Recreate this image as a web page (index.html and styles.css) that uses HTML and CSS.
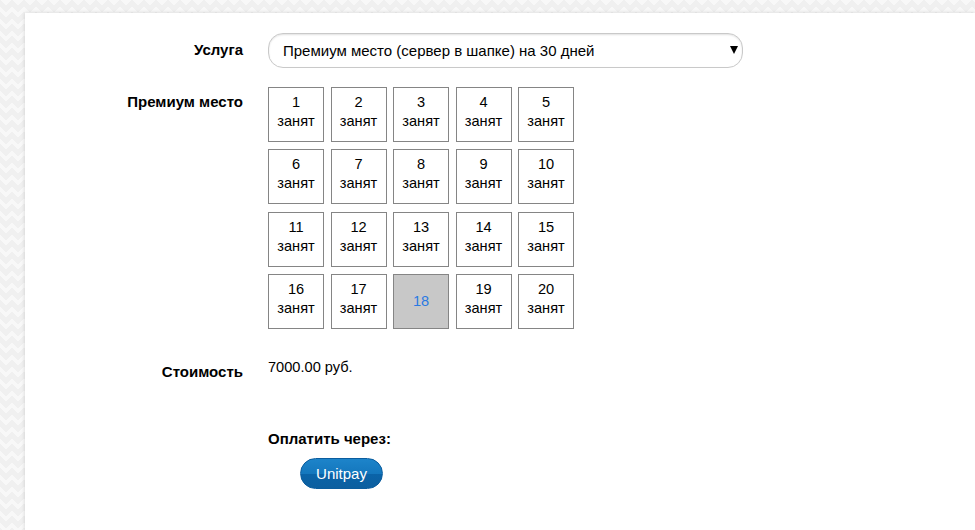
FILE: index.html
```html
<!DOCTYPE html>
<html lang="ru">
<head>
  <meta charset="UTF-8" />
  <title>Премиум место</title>
  <meta name="viewport" content="width=device-width, initial-scale=1.0" />
  <link rel="stylesheet" href="styles.css">
</head>
<body>
  <div class="card">

    <div class="row row-service">
      <div class="label">Услуга</div>
      <div class="field">
        <div class="select-wrap">
          <select class="select">
            <option>Премиум место (сервер в шапке) на 30 дней</option>
          </select>
        </div>
      </div>
    </div>

    <div class="row row-places">
      <div class="label">Премиум место</div>
      <div class="field">
        <div class="places">
          <div class="place">1<br>занят</div>
          <div class="place">2<br>занят</div>
          <div class="place">3<br>занят</div>
          <div class="place">4<br>занят</div>
          <div class="place">5<br>занят</div>
          <div class="place">6<br>занят</div>
          <div class="place">7<br>занят</div>
          <div class="place">8<br>занят</div>
          <div class="place">9<br>занят</div>
          <div class="place">10<br>занят</div>
          <div class="place">11<br>занят</div>
          <div class="place">12<br>занят</div>
          <div class="place">13<br>занят</div>
          <div class="place">14<br>занят</div>
          <div class="place">15<br>занят</div>
          <div class="place">16<br>занят</div>
          <div class="place">17<br>занят</div>
          <a class="place free selected" href="#">18</a>
          <div class="place">19<br>занят</div>
          <div class="place">20<br>занят</div>
        </div>
      </div>
    </div>

    <div class="row row-price">
      <div class="label">Стоимость</div>
      <div class="field price">7000.00 руб.</div>
    </div>

    <div class="row row-pay">
      <div class="label"></div>
      <div class="field">
        <div class="pay-title">Оплатить через:</div>
        <button class="pay-btn">Unitpay</button>
      </div>
    </div>

  </div>
</body>
</html>
```

FILE: styles.css
```css
html, body {
  height: 100%;
}

body {
  margin: 0;
  font-family: "Liberation Sans", Arial, sans-serif;
  font-size: 14.6px;
  color: #000;
  background-color: #f0f0f0;
  background-image:
    linear-gradient(135deg, #f8f8f8 25%, transparent 25%),
    linear-gradient(225deg, #f8f8f8 25%, transparent 25%),
    linear-gradient(315deg, #f8f8f8 25%, transparent 25%),
    linear-gradient(45deg, #f8f8f8 25%, transparent 25%);
  background-position: -6px 0, -6px 0, 0 0, 0 0;
  background-size: 12px 12px;
  overflow: hidden;
}

.card {
  box-sizing: border-box;
  height: 517px;
  margin: 13px 0 0 25px;
  padding-top: 20px;
  background: #fff;
  box-shadow: 0 0 4px rgba(0, 0, 0, 0.15);
}

.row {
  display: grid;
  grid-template-columns: 218px 475px;
  column-gap: 25px;
}

.label {
  text-align: right;
  font-weight: bold;
  font-size: 15px;
  line-height: 20px;
  padding-top: 5px;
}

.row-service .label {
  padding-top: 7px;
}

.row-places {
  margin-top: 19px;
}

.row-price {
  margin-top: 28px;
}

.row-pay {
  margin-top: 47px;
}

/* select */
.select-wrap {
  position: relative;
}

.select-wrap::after {
  content: "";
  position: absolute;
  right: 5px;
  top: 13px;
  border-left: 4px solid transparent;
  border-right: 4px solid transparent;
  border-top: 8px solid #000;
  pointer-events: none;
}

.select {
  display: block;
  width: 475px;
  height: 35px;
  padding: 0 30px 0 14px;
  font-family: inherit;
  font-size: 15px;
  color: #000;
  background: #fff;
  border: 1px solid #c9c9c9;
  border-radius: 15px;
  box-shadow: inset 0 1px 2px rgba(0, 0, 0, 0.12);
  appearance: none;
  -webkit-appearance: none;
  outline: none;
}

/* places */
.places {
  display: grid;
  grid-template-columns: repeat(5, 56px);
  grid-auto-rows: 55px;
  column-gap: 6.5px;
  row-gap: 7.33px;
}

.place {
  box-sizing: border-box;
  border: 1px solid #858585;
  text-align: center;
  line-height: 19px;
  padding-top: 5px;
  color: #000;
  text-decoration: none;
}

.place.free {
  display: flex;
  align-items: center;
  justify-content: center;
  padding-top: 0;
  color: #2a7ae2;
}

.place.selected {
  background: #c8c8c8;
}

/* price & pay */
.price {
  line-height: 20px;
}

.pay-title {
  font-weight: bold;
  font-size: 15px;
  line-height: 20px;
}

.pay-btn {
  display: block;
  margin: 9px 0 0 32px;
  width: 83px;
  height: 31px;
  padding: 0;
  font-family: inherit;
  font-size: 15px;
  color: #fff;
  border: 1px solid #0b5d9e;
  border-radius: 16px;
  background: linear-gradient(#1d84ca 0%, #1477bd 50%, #0a63a8 52%, #0c5f9f 100%);
  cursor: pointer;
}
```
